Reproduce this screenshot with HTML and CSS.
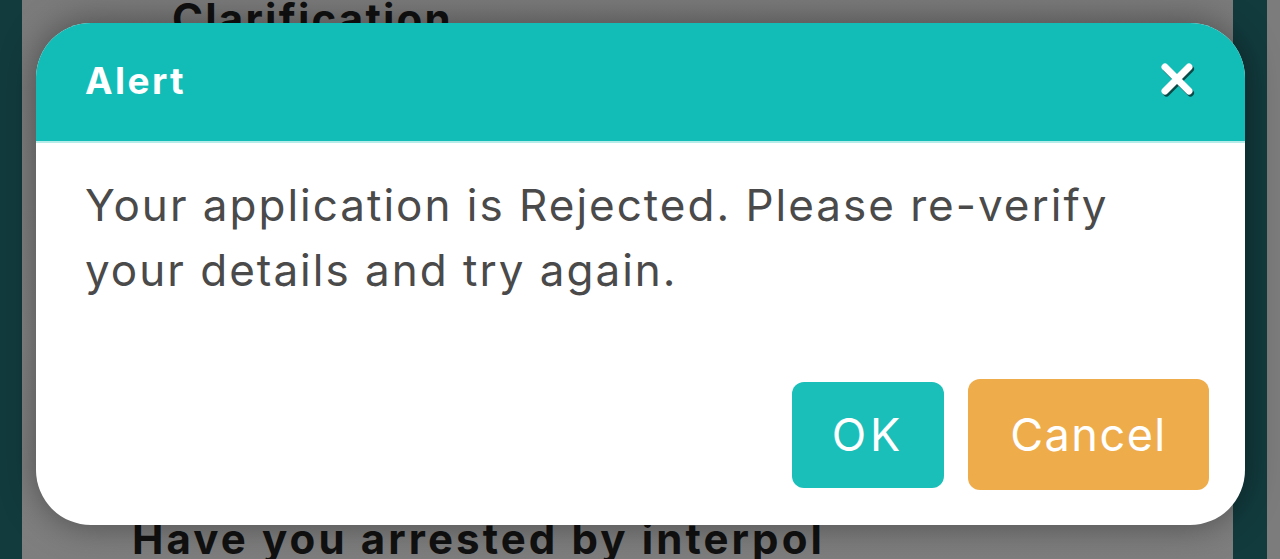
FILE: index.html
```html
<!DOCTYPE html>
<html>
	<head>
		<title>Alert</title>
		<link rel="stylesheet" href="styles.css">
	</head>
	<body>
		<div class="screen">
			<div class="edge dark"></div>
			<div class="page">
				<h3 class="question top">Clarification</h3>
				<h3 class="question bottom">Have you arrested by interpol</h3>
			</div>
			<div class="edge dark wide"></div>
			<div class="edge rest"></div>
		</div>

		<div class="dialog">
			<div class="dialog-head">
				<span class="dialog-title">Alert</span>
				<svg class="close" width="40" height="40" viewBox="0 0 40 40">
					<path d="M8 8 L32 32 M32 8 L8 32" stroke="#0a4a48" stroke-width="7" stroke-linecap="round" transform="translate(1.5,2)"/>
					<path d="M8 8 L32 32 M32 8 L8 32" stroke="#ffffff" stroke-width="7" stroke-linecap="round"/>
				</svg>
			</div>
			<div class="dialog-body">
				<p class="message">Your application is Rejected. Please re-verify your details and try again.</p>
				<div class="actions">
					<button class="btn ok">OK</button>
					<button class="btn cancel">Cancel</button>
				</div>
			</div>
		</div>
	</body>
</html>
```

FILE: styles.css
```css
body
{
	margin: 0;
	width: 1280px;
	height: 559px;
	overflow: hidden;
	font-family: Inter, "Noto Sans", sans-serif;
	position: relative;
}

.screen
{
	display: flex;
	height: 559px;
}
.edge
{
	width: 22px;
}
.dark
{
	background-color: #123b3e;
}
.wide
{
	width: 34px;
}
.rest
{
	width: 13px;
	background-color: #7c7c7c;
}
.page
{
	flex: 1;
	display: flex;
	flex-direction: column;
	justify-content: space-between;
	background: linear-gradient(#7b7b7b, #858585 60%, #7e7e7e);
}
.question
{
	margin: 0;
	font-size: 42px;
	line-height: 42px;
	font-weight: 700;
	color: #111;
	letter-spacing: 2.2px;
}
.top
{
	margin-top: -2px;
	padding-left: 150px;
}
.bottom
{
	padding-left: 110px;
	margin-bottom: -1px;
	letter-spacing: 3.1px;
}

.dialog
{
	position: absolute;
	left: 36px;
	top: 23px;
	width: 1209px;
	height: 502px;
	border-radius: 55px;
	background-color: #ffffff;
	overflow: hidden;
	box-shadow: 0 0 36px rgba(0, 0, 0, 0.42);
	display: flex;
	flex-direction: column;
}
.dialog-head
{
	height: 118px;
	background-color: #13bdb7;
	border-bottom: 2px solid #b5ebe9;
	display: flex;
	align-items: center;
	justify-content: space-between;
	padding: 0 48px 0 49px;
}
.dialog-title
{
	color: #ffffff;
	font-size: 37px;
	font-weight: 700;
	letter-spacing: 2.4px;
	margin-top: -4px;
}
.close
{
	margin-top: -6px;
}
.dialog-body
{
	flex: 1;
	display: flex;
	flex-direction: column;
	justify-content: space-between;
	padding: 30px 36px 35px 49px;
}
.message
{
	margin: 0;
	font-size: 44px;
	line-height: 65px;
	color: #4a4a4a;
	letter-spacing: 2px;
	width: 1090px;
}
.actions
{
	display: flex;
	justify-content: flex-end;
	align-items: center;
	gap: 24px;
}
.btn
{
	border: none;
	border-radius: 12px;
	color: #ffffff;
	font-family: Inter, "Noto Sans", sans-serif;
	font-size: 45px;
	letter-spacing: 1.5px;
}
.ok
{
	width: 152px;
	height: 106px;
	background-color: #1bbfb9;
	letter-spacing: 4px;
}
.cancel
{
	width: 241px;
	height: 111px;
	background-color: #efac4b;
}
```
